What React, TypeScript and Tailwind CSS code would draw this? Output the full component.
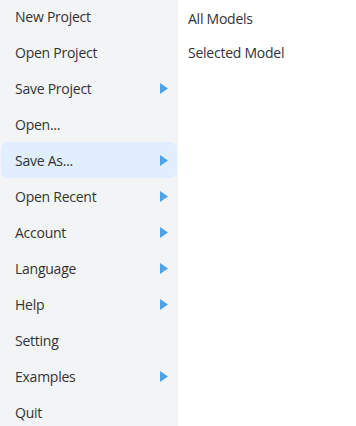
import { useState } from 'react';

const items = [
  { label: 'New Project' },
  { label: 'Open Project' },
  { label: 'Save Project', sub: true },
  { label: 'Open...' },
  { label: 'Save As...', sub: true },
  { label: 'Open Recent', sub: true },
  { label: 'Account', sub: true },
  { label: 'Language', sub: true },
  { label: 'Help', sub: true },
  { label: 'Setting' },
  { label: 'Examples', sub: true },
  { label: 'Quit' },
];

const subItems = ['All Models', 'Selected Model'];

function Caret() {
  return (
    <svg width="8" height="11" viewBox="0 0 8 11" className="shrink-0">
      <path d="M0 0 L8 5.5 L0 11 Z" fill="#4ba3e9" />
    </svg>
  );
}

export default function App() {
  const [active, setActive] = useState('Save As...');

  return (
    <div
      className="flex w-[356px] h-[426px] bg-white overflow-hidden text-[#333333] text-[14px] tracking-[-0.25px]"
      style={{ fontFamily: '"Open Sans", "Noto Sans", sans-serif' }}
    >
      {/* main menu */}
      <div className="w-[178px] bg-[#f3f4f6] px-[1px] -mt-[2px]">
        {items.map((item) => (
          <div
            key={item.label}
            onMouseEnter={() => setActive(item.label)}
            className={`flex items-center justify-between h-[36px] pl-[14px] pr-[9px] rounded-[7px] ${
              active === item.label ? 'bg-[#e0eefd]' : ''
            }`}
          >
            <span>{item.label}</span>
            {item.sub && <Caret />}
          </div>
        ))}
      </div>

      {/* submenu */}
      <div className="flex-1 pt-px">
        {subItems.map((label) => (
          <div key={label} className="flex items-center h-[34px] pl-[10px]">
            {label}
          </div>
        ))}
      </div>
    </div>
  );
}
